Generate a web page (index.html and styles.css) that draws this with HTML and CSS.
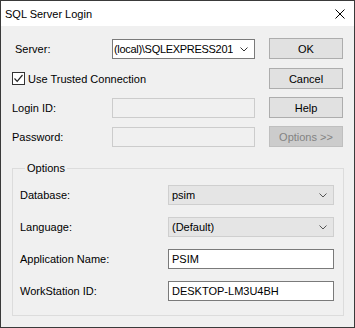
FILE: index.html
```html
<!DOCTYPE html>
<html lang="en">
<head>
  <meta charset="UTF-8">
  <title>SQL Server Login</title>
  <link rel="stylesheet" href="styles.css">
</head>
<body>
  <div class="window">
    <div class="titlebar">
      <span class="title">SQL Server Login</span>
      <svg class="close" width="10" height="10" viewBox="0 0 10 10"><path d="M0.5 0.5 L9.5 9.5 M9.5 0.5 L0.5 9.5" stroke="#000" stroke-width="1"/></svg>
    </div>
    <div class="client">
      <div class="login-grid">
        <label class="lbl lbl-server">Server:</label>
        <div class="combo combo-edit">
          <span class="combo-text">(local)\SQLEXPRESS201</span>
          <svg class="chev" width="8" height="5" viewBox="0 0 8 5"><path d="M0.5 0.5 L4 4 L7.5 0.5" fill="none" stroke="#333"/></svg>
        </div>
        <button class="btn">OK</button>

        <div class="check-row">
          <span class="checkbox"><svg width="11" height="11" viewBox="0 0 11 11"><path d="M1.5 5.5 L4.2 8.3 L9.5 2" fill="none" stroke="#222" stroke-width="1.2"/></svg></span>
          <span>Use Trusted Connection</span>
        </div>
        <button class="btn">Cancel</button>

        <label class="lbl lbl-dim">Login ID:</label>
        <div class="field field-off"></div>
        <button class="btn">Help</button>

        <label class="lbl lbl-dim">Password:</label>
        <div class="field field-off"></div>
        <button class="btn btn-off">Options &gt;&gt;</button>
      </div>

      <fieldset class="group">
        <legend>Options</legend>
        <div class="opt-grid">
          <label class="lbl">Database:</label>
          <div class="combo combo-list">
            <span class="combo-text">psim</span>
            <svg class="chev" width="8" height="5" viewBox="0 0 8 5"><path d="M0.5 0.5 L4 4 L7.5 0.5" fill="none" stroke="#555"/></svg>
          </div>

          <label class="lbl">Language:</label>
          <div class="combo combo-list">
            <span class="combo-text">(Default)</span>
            <svg class="chev" width="8" height="5" viewBox="0 0 8 5"><path d="M0.5 0.5 L4 4 L7.5 0.5" fill="none" stroke="#555"/></svg>
          </div>

          <label class="lbl">Application Name:</label>
          <div class="field">PSIM</div>

          <label class="lbl">WorkStation ID:</label>
          <div class="field">DESKTOP-LM3U4BH</div>
        </div>
      </fieldset>
    </div>
  </div>
</body>
</html>
```

FILE: styles.css
```css
* { box-sizing: border-box; }
body { margin: 0; font-family: "Liberation Sans", Arial, sans-serif; font-size: 11px; color: #000; background: #f0f0f0; }
.window { width: 355px; height: 328px; border: 1px solid #3a3a3a; display: flex; flex-direction: column; }
.titlebar { height: 25px; background: #fff; display: flex; align-items: center; justify-content: space-between; padding: 0 9px 0 4px; }
.title { font-size: 11px; }
.client { flex: 1; background: #f0f0f0; padding: 12px 11px 0 11px; }

.login-grid { display: grid; grid-template-columns: 100px 143px 1fr; grid-template-rows: 22px 21px 21px 21px; row-gap: 8px; align-items: center; }
.lbl { white-space: nowrap; }
.lbl-server { padding-left: 3px; }
.check-row { grid-column: 1 / 3; display: flex; align-items: center; gap: 3px; }
.checkbox { width: 13px; height: 13px; border: 1px solid #333; background: #fff; display: flex; align-items: center; justify-content: center; }

.combo { height: 20px; display: flex; align-items: center; justify-content: space-between; padding: 0 6px 0 2px; }
.combo-edit { background: #fff; border: 1px solid #7a7a7a; padding-left: 1px; }
.combo-edit .combo-text { letter-spacing: -0.3px; }
.combo-list { background: #e5e5e5; border: 1px solid #cfcfcf; padding-left: 3px; }
.combo-text { white-space: nowrap; overflow: hidden; }
.chev { flex: none; margin-left: 3px; }

.field { height: 20px; background: #fff; border: 1px solid #7a7a7a; padding: 0 3px; display: flex; align-items: center; }
.field-off { background: #f0f0f0; border-color: #cccccc; }

.btn { height: 21px; width: 74px; align-self: start; justify-self: end; font-family: inherit; font-size: 11px; color: #000; background: #e1e1e1; border: 1px solid #adadad; padding: 0; }
.btn-off { background: #cccccc; border-color: #bfbfbf; color: #838383; }

.group { margin: 15px 0 0 0; padding: 10px 8px 14px 7px; width: 332px; border: 1px solid #dcdcdc; }
.group legend { padding: 0 2px; margin-left: 5px; line-height: 13px; }
.opt-grid { display: grid; grid-template-columns: 148px 166px; grid-template-rows: repeat(4, 20px); row-gap: 12px; align-items: center; }
```
